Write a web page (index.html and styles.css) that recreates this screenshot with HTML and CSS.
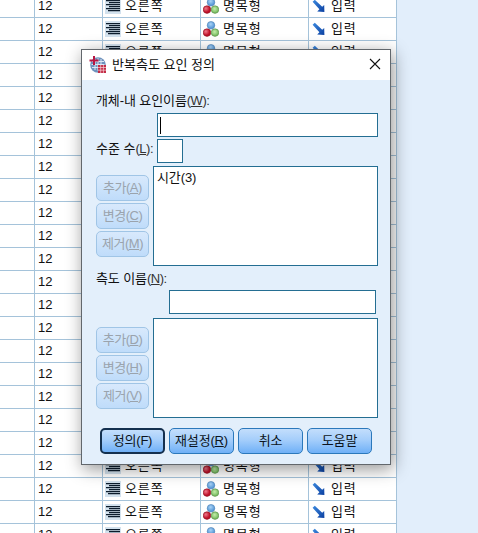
FILE: index.html
```
<!DOCTYPE html>
<html lang="ko">
<head>
    <meta charset="UTF-8">
    <meta name="viewport" content="width=device-width, initial-scale=1.0">
    <title>반복측도 요인 정의</title>
    <link rel="stylesheet" href="styles.css">
</head>
<body>

    <svg class="sprite" width="0" height="0">
        <defs>
            <radialGradient id="blueBall" cx="45%" cy="35%"><stop offset="0" stop-color="#a9d3f7"/><stop offset="1" stop-color="#5b9bd8"/></radialGradient>
            <radialGradient id="redBall" cx="35%" cy="35%"><stop offset="0" stop-color="#f0788a"/><stop offset="1" stop-color="#bd1028"/></radialGradient>
            <radialGradient id="greenBall" cx="45%" cy="40%"><stop offset="0" stop-color="#c3edaa"/><stop offset="1" stop-color="#79bd62"/></radialGradient>
            <linearGradient id="arrowBlue" x1="0" y1="0" x2="1" y2="1"><stop offset="0" stop-color="#3c8ae0"/><stop offset="1" stop-color="#0b3fa0"/></linearGradient>
        </defs>
        <symbol id="iconAlign" viewBox="0 0 16 16">
            <rect width="16" height="16" fill="#d3e2ee"/>
            <path d="M1 2.5h14M4 4.5h11M1 6.5h14M4 8.5h11M1 10.5h14M3 12.5h12" stroke="#0c1c2c" stroke-width="1.25"/>
        </symbol>
        <symbol id="iconNominal" viewBox="0 0 16 16">
            <circle cx="8" cy="4.3" r="3.8" fill="url(#blueBall)" stroke="#4c80b4" stroke-width=".6"/>
            <circle cx="4" cy="11.6" r="3.8" fill="url(#redBall)" stroke="#8c1020" stroke-width=".6"/>
            <circle cx="12" cy="11.6" r="3.8" fill="url(#greenBall)" stroke="#558a48" stroke-width=".6"/>
        </symbol>
        <symbol id="iconInput" viewBox="0 0 14 14">
            <path d="M.6 2.8 2.8.8l7.4 7 2-1.9.2 7-7.2-.3 2.2-2.3z" fill="url(#arrowBlue)"/>
        </symbol>
    </svg>

    <table class="grid">
        <tbody id="rows"></tbody>
    </table>

    <div class="dialog">
        <div class="titlebar">
            <svg class="app-icon" viewBox="0 0 18 18" width="18" height="18">
                <circle cx="9" cy="9" r="7.8" fill="#6f92bd"/>
                <path d="M2.5 8.5h13M3 5.5h12M3 11.5h12M9 2.2v12.6M6 3v11M12 3v11" stroke="#dbe7f4" stroke-width="1"/>
                <path d="M5 0v9M.5 4.5h9" stroke="#b71643" stroke-width="2"/>
                <rect x="9" y="9" width="8" height="8" fill="#c32b45"/>
                <path d="M9 11.5h8M9 14.2h8M11.7 9v8M14.4 9v8" stroke="#f5d4da" stroke-width=".7"/>
            </svg>
            <span class="title">반복측도 요인 정의</span>
            <svg class="close" viewBox="0 0 12 12" width="12" height="12"><path d="M1 1l10 10M11 1L1 11" stroke="#111" stroke-width="1.1"/></svg>
        </div>

        <div class="content">
            <div class="label">개체-내 요인이름<span class="key">(<u>W</u>):</span></div>
            <div class="field factor"><span class="caret"></span></div>
            <div class="level">
                <span class="level-label">수준 수<span class="key">(<u>L</u>):</span></span>
                <div class="field small"></div>
            </div>
            <div class="list-row">
                <div class="side">
                    <button class="button" disabled>추가(<u>A</u>)</button>
                    <button class="button" disabled>변경(<u>C</u>)</button>
                    <button class="button" disabled>제거(<u>M</u>)</button>
                </div>
                <div class="list">시간(3)</div>
            </div>

            <div class="label measure-label">측도 이름<span class="key">(<u>N</u>):</span></div>
            <div class="field measure"></div>
            <div class="list-row">
                <div class="side">
                    <button class="button" disabled>추가(<u>D</u>)</button>
                    <button class="button" disabled>변경(<u>H</u>)</button>
                    <button class="button" disabled>제거(<u>V</u>)</button>
                </div>
                <div class="list"></div>
            </div>

            <div class="footer">
                <button class="button default">정의(F)</button>
                <button class="button">재설정(<u>R</u>)</button>
                <button class="button">취소</button>
                <button class="button">도움말</button>
            </div>
        </div>
    </div>

    <script>
        function cell(name, icon, size, text) {
            return '<td class="' + name + '"><div class="cell"><svg width="' + size + '" height="' + size + '">' +
                '<use href="#' + icon + '"/></svg>' + text + '</div></td>';
        }

        var html = "";
        for (var i = 0; i < 24; i++) {
            html += '<tr><td class="blank"></td><td class="columns">12</td>';
            // rows 3-19 are fully covered by the dialog
            if (i > 2 && i < 20) {
                html += '<td class="align"></td><td class="type"></td><td class="role"></td>';
            } else {
                html += cell("align", "iconAlign", 16, "오른쪽") +
                    cell("type", "iconNominal", 16, "명목형") +
                    cell("role", "iconInput", 14, "입력");
            }
            html += '</tr>';
        }
        document.getElementById("rows").innerHTML = html;
    </script>

</body>
</html>
```
FILE: styles.css
```
* {
    box-sizing: border-box;
}

body {
    font-family: "Liberation Sans", "Noto Sans CJK KR", sans-serif;
    font-size: 13px;
    color: #111;
    background: #e2eefb;
    margin: 0;
    height: 533px;
    overflow: hidden;
}

.sprite {
    position: absolute;
}

.grid {
    width: 397px;
    margin-top: -5px;
    table-layout: fixed;
    border-collapse: separate;
    border-spacing: 0;
    background: white;
}

.grid td {
    height: 23px;
    padding: 0;
    line-height: 16px;
    border-right: 1px solid #a5c3da;
    border-bottom: 1px solid #a5c3da;
}

.blank {
    width: 35px;
}

.grid .columns {
    width: 68px;
    padding-left: 3px;
}

.align {
    width: 98px;
}

.type {
    width: 108px;
}

.role {
    width: 88px;
}

.cell {
    display: flex;
    align-items: center;
    gap: 4px;
    height: 22px;
    padding-left: 2px;
    letter-spacing: 0.9px;
}

.role .cell {
    padding-left: 3px;
    gap: 5px;
}

.dialog {
    position: absolute;
    left: 81px;
    top: 49px;
    width: 310px;
    height: 416px;
    background: #e3effb;
    border: 1px solid #62676c;
    box-shadow: 2px 4px 16px rgba(0, 0, 0, 0.42);
}

.titlebar {
    display: flex;
    align-items: center;
    height: 30px;
    padding: 0 9px 0 7px;
    background: white;
}

.title {
    margin-left: 5px;
    padding-bottom: 3px;
}

.close {
    margin-left: auto;
    margin-bottom: 2px;
}

.content {
    padding: 12px 12px 0 14px;
}

.label {
    height: 21px;
    line-height: 18px;
    letter-spacing: -0.1px;
}

.key {
    color: #333;
    letter-spacing: -0.5px;
}

.field {
    height: 24px;
    background: white;
    border: 1px solid #246e92;
}

.factor {
    width: 221px;
    margin-left: 61px;
    padding: 3px 2px;
}

.caret {
    display: block;
    width: 1px;
    height: 17px;
    background: black;
}

.level {
    display: flex;
    margin-top: 2px;
    margin-bottom: 3px;
}

.level-label {
    width: 61px;
    line-height: 20px;
    white-space: nowrap;
}

.small {
    width: 26px;
}

.list-row {
    display: flex;
    gap: 4px;
}

.side {
    display: flex;
    flex-direction: column;
    gap: 2px;
    padding-top: 9px;
}

.list {
    width: 225px;
    height: 100px;
    padding: 2px 3px;
    line-height: 18px;
    letter-spacing: -0.1px;
    background: white;
    border: 1px solid #246e92;
}

.measure-label {
    height: 24px;
    line-height: 25px;
}

.measure {
    width: 207px;
    margin-left: 73px;
    margin-bottom: 4px;
}

.button {
    width: 65px;
    height: 26px;
    padding: 0;
    font-family: inherit;
    font-size: 13px;
    line-height: 22px;
    letter-spacing: -0.2px;
    white-space: nowrap;
    color: #0c1420;
    background: linear-gradient(#c3defc, #a5cefb 45%, #6fb0f7);
    border: 1px solid #2b78bb;
    border-radius: 5px;
}

.side .button {
    width: 53px;
    letter-spacing: -0.5px;
    color: #9aa3ad;
    background: linear-gradient(#d8e9fc, #bfdcfa);
    border-color: #a0c5e6;
}

.footer .default {
    border: 2px solid #14304f;
    line-height: 20px;
}

.footer {
    display: flex;
    gap: 4px;
    margin-top: 10px;
    padding-left: 4px;
}
```
